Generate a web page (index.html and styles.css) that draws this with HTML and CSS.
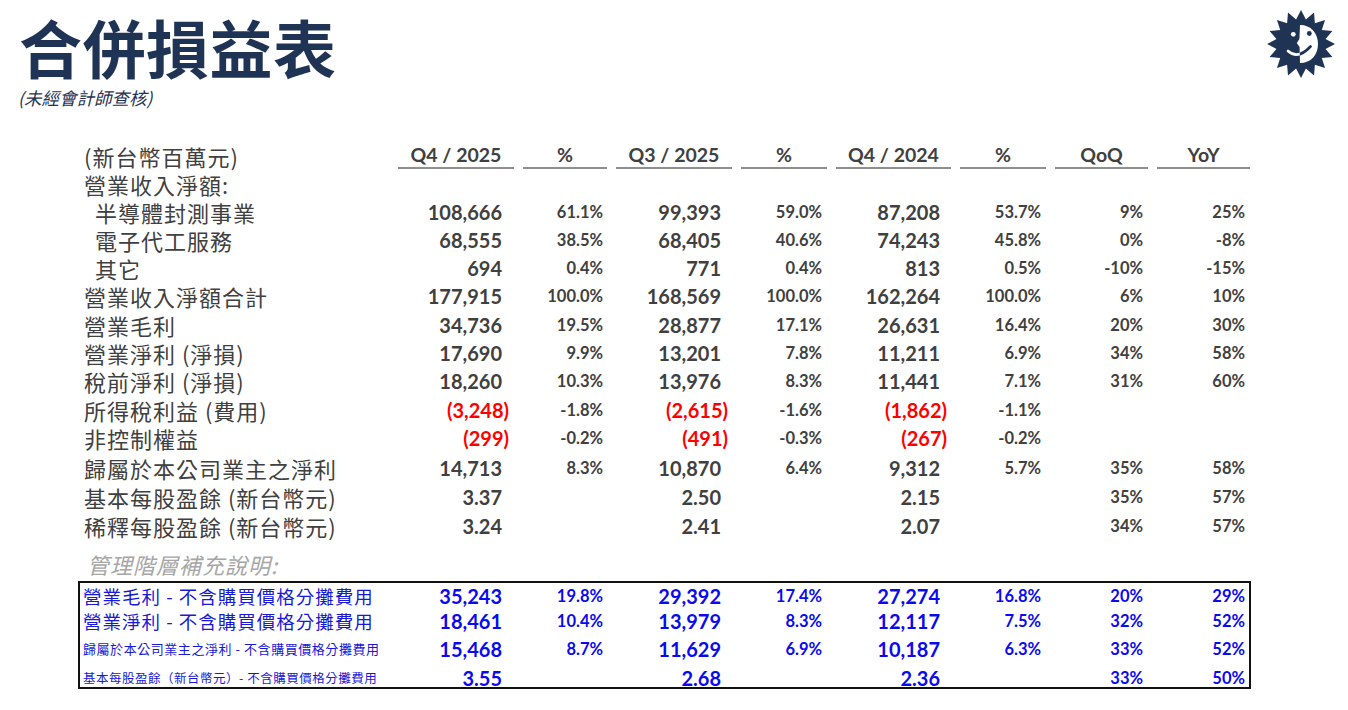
FILE: index.html
```html
<!DOCTYPE html>
<html lang="zh-Hant">
<head>
<meta charset="utf-8">
<title>合併損益表</title>
<link rel="stylesheet" href="styles.css">
</head>
<body>
<header class="top">
  <div class="titles">
    <h1 class="title">合併損益表</h1>
    <p class="subtitle">(未經會計師查核)</p>
  </div>
  <svg class="logo" viewBox="0 0 70 70" width="70" height="70" aria-hidden="true">
    <defs>
      <clipPath id="faceclip">
        <path d="M34,16 C45,16 52,24 52,35 C52,46 45,54 34,54 L33.6,38 L30.8,34 L33.4,30 Z"/>
      </clipPath>
    </defs>
    <polygon fill="#1f3354" points="35,1 39.88,10.48 48.01,3.59 48.89,14.21 59.04,10.96 55.79,21.11 66.41,21.99 59.52,30.12 69,35 59.52,39.88 66.41,48.01 55.79,48.89 59.04,59.04 48.89,55.79 48.01,66.41 39.88,59.52 35,69 30.12,59.52 21.99,66.41 21.11,55.79 10.96,59.04 14.21,48.89 3.59,48.01 10.48,39.88 1,35 10.48,30.12 3.59,21.99 14.21,21.11 10.96,10.96 21.11,14.21 21.99,3.59 30.12,10.48"/>
    <path fill="#ffffff" d="M34,16 C45,16 52,24 52,35 C52,46 45,54 34,54 L33.6,38 L30.8,34 L33.4,30 Z"/>
    <circle cx="27.3" cy="25.3" r="2.4" fill="#ffffff"/>
    <circle cx="43.3" cy="24.5" r="2.4" fill="#1f3354"/>
    <path d="M22,42 Q32,51 44.5,37.5" fill="none" stroke="#ffffff" stroke-width="2.6" stroke-linecap="round"/>
    <path d="M22,42 Q32,51 44.5,37.5" fill="none" stroke="#1f3354" stroke-width="2.6" stroke-linecap="round" clip-path="url(#faceclip)"/>
  </svg>
</header>

<section class="stmt">
  <div class="row head">
    <div class="lbl">(新台幣百萬元)</div>
    <div class="h">Q4 / 2025</div>
    <div class="h">%</div>
    <div class="h">Q3 / 2025</div>
    <div class="h">%</div>
    <div class="h">Q4 / 2024</div>
    <div class="h">%</div>
    <div class="h">QoQ</div>
    <div class="h">YoY</div>
  </div>

  <div class="row mt1">
    <div class="lbl">營業收入淨額:</div>
    <div></div><div></div><div></div><div></div><div></div><div></div><div></div><div></div>
  </div>

  <div class="row">
    <div class="lbl ind">半導體封測事業</div>
    <div class="n">108,666</div><div class="p">61.1%</div>
    <div class="n">99,393</div><div class="p">59.0%</div>
    <div class="n">87,208</div><div class="p">53.7%</div>
    <div class="p">9%</div><div class="p">25%</div>
  </div>

  <div class="row">
    <div class="lbl ind">電子代工服務</div>
    <div class="n">68,555</div><div class="p">38.5%</div>
    <div class="n">68,405</div><div class="p">40.6%</div>
    <div class="n">74,243</div><div class="p">45.8%</div>
    <div class="p">0%</div><div class="p">-8%</div>
  </div>

  <div class="row">
    <div class="lbl ind">其它</div>
    <div class="n">694</div><div class="p">0.4%</div>
    <div class="n">771</div><div class="p">0.4%</div>
    <div class="n">813</div><div class="p">0.5%</div>
    <div class="p">-10%</div><div class="p">-15%</div>
  </div>

  <div class="row">
    <div class="lbl">營業收入淨額合計</div>
    <div class="n">177,915</div><div class="p">100.0%</div>
    <div class="n">168,569</div><div class="p">100.0%</div>
    <div class="n">162,264</div><div class="p">100.0%</div>
    <div class="p">6%</div><div class="p">10%</div>
  </div>

  <div class="row mt1">
    <div class="lbl">營業毛利</div>
    <div class="n">34,736</div><div class="p">19.5%</div>
    <div class="n">28,877</div><div class="p">17.1%</div>
    <div class="n">26,631</div><div class="p">16.4%</div>
    <div class="p">20%</div><div class="p">30%</div>
  </div>

  <div class="row">
    <div class="lbl">營業淨利 (淨損)</div>
    <div class="n">17,690</div><div class="p">9.9%</div>
    <div class="n">13,201</div><div class="p">7.8%</div>
    <div class="n">11,211</div><div class="p">6.9%</div>
    <div class="p">34%</div><div class="p">58%</div>
  </div>

  <div class="row">
    <div class="lbl">稅前淨利 (淨損)</div>
    <div class="n">18,260</div><div class="p">10.3%</div>
    <div class="n">13,976</div><div class="p">8.3%</div>
    <div class="n">11,441</div><div class="p">7.1%</div>
    <div class="p">31%</div><div class="p">60%</div>
  </div>

  <div class="row h29">
    <div class="lbl">所得稅利益 (費用)</div>
    <div class="n"><span class="neg">(3,248)</span></div><div class="p">-1.8%</div>
    <div class="n"><span class="neg">(2,615)</span></div><div class="p">-1.6%</div>
    <div class="n"><span class="neg">(1,862)</span></div><div class="p">-1.1%</div>
    <div class="p"></div><div class="p"></div>
  </div>

  <div class="row">
    <div class="lbl">非控制權益</div>
    <div class="n"><span class="neg">(299)</span></div><div class="p">-0.2%</div>
    <div class="n"><span class="neg">(491)</span></div><div class="p">-0.3%</div>
    <div class="n"><span class="neg">(267)</span></div><div class="p">-0.2%</div>
    <div class="p"></div><div class="p"></div>
  </div>

  <div class="row mt2">
    <div class="lbl">歸屬於本公司業主之淨利</div>
    <div class="n">14,713</div><div class="p">8.3%</div>
    <div class="n">10,870</div><div class="p">6.4%</div>
    <div class="n">9,312</div><div class="p">5.7%</div>
    <div class="p">35%</div><div class="p">58%</div>
  </div>

  <div class="row mt1">
    <div class="lbl">基本每股盈餘 (新台幣元)</div>
    <div class="n">3.37</div><div class="p"></div>
    <div class="n">2.50</div><div class="p"></div>
    <div class="n">2.15</div><div class="p"></div>
    <div class="p">35%</div><div class="p">57%</div>
  </div>

  <div class="row mt1">
    <div class="lbl">稀釋每股盈餘 (新台幣元)</div>
    <div class="n">3.24</div><div class="p"></div>
    <div class="n">2.41</div><div class="p"></div>
    <div class="n">2.07</div><div class="p"></div>
    <div class="p">34%</div><div class="p">57%</div>
  </div>

  <div class="note">管理階層補充說明:</div>

  <div class="box">
    <div class="row b1">
      <div class="bl bl-lg">營業毛利 - 不含購買價格分攤費用</div>
      <div class="n">35,243</div><div class="p">19.8%</div>
      <div class="n">29,392</div><div class="p">17.4%</div>
      <div class="n">27,274</div><div class="p">16.8%</div>
      <div class="p">20%</div><div class="p">29%</div>
    </div>
    <div class="row b2">
      <div class="bl bl-lg">營業淨利 - 不含購買價格分攤費用</div>
      <div class="n">18,461</div><div class="p">10.4%</div>
      <div class="n">13,979</div><div class="p">8.3%</div>
      <div class="n">12,117</div><div class="p">7.5%</div>
      <div class="p">32%</div><div class="p">52%</div>
    </div>
    <div class="row b3">
      <div class="bl bl-sm">歸屬於本公司業主之淨利 - 不含購買價格分攤費用</div>
      <div class="n">15,468</div><div class="p">8.7%</div>
      <div class="n">11,629</div><div class="p">6.9%</div>
      <div class="n">10,187</div><div class="p">6.3%</div>
      <div class="p">33%</div><div class="p">52%</div>
    </div>
    <div class="row b4">
      <div class="bl bl-xs">基本每股盈餘（新台幣元）- 不含購買價格分攤費用</div>
      <div class="n">3.55</div><div class="p"></div>
      <div class="n">2.68</div><div class="p"></div>
      <div class="n">2.36</div><div class="p"></div>
      <div class="p">33%</div><div class="p">50%</div>
    </div>
  </div>
</section>
</body>
</html>
```

FILE: styles.css
```css
* { box-sizing: border-box; }

body {
  margin: 0;
  width: 1348px;
  height: 710px;
  overflow: hidden;
  background: #ffffff;
  color: #404040;
  font-family: "Noto Sans CJK TC", "Noto Sans", sans-serif;
}

/* ---------- header ---------- */
.top {
  display: flex;
  justify-content: space-between;
  align-items: flex-start;
  padding: 10px 12px 0 19px;
}

.title {
  margin: 0;
  font-size: 63px;
  line-height: 72px;
  letter-spacing: 0.5px;
  font-weight: 700;
  color: #1f3354;
}

.subtitle {
  margin: 7px 0 0 -1px;
  font-size: 17.5px;
  line-height: 17px;
  font-style: italic;
  color: #1f3354;
}

.logo {
  display: block;
  margin-top: -1px;
}

/* ---------- statement table ---------- */
.stmt {
  margin: 36px 0 0 78px;
  width: 1173px;
}

.row {
  display: grid;
  grid-template-columns: 311px 116px 84px 116px 86px 115px 86px 93px 93px;
  column-gap: 9px;
  height: 28px;
  align-items: center;
}

.mt1 { margin-top: 1px; }
.mt2 { margin-top: 2px; }
.h29 { height: 29px; }

.lbl {
  padding-left: 6px;
  font-size: 22px;
  line-height: 26px;
  letter-spacing: 1px;
  white-space: nowrap;
  color: #404040;
}

.lbl.ind { padding-left: 17px; }

.n, .p {
  text-align: right;
  font-family: "Lato", "Open Sans", sans-serif;
  font-weight: 700;
  white-space: nowrap;
  line-height: 24px;
}

.n { font-size: 20px; }
.p { font-size: 16.5px; }

.row > :nth-child(2) { padding-right: 12px; }
.row > :nth-child(3) { padding-right: 4px; }
.row > :nth-child(4) { padding-right: 11px; }
.row > :nth-child(5) { padding-right: 5px; }
.row > :nth-child(6) { padding-right: 11px; }
.row > :nth-child(7) { padding-right: 5px; }
.row > :nth-child(8) { padding-right: 5px; }
.row > :nth-child(9) { padding-right: 5px; }

.neg {
  color: #ff0000;
  margin-right: -7px;
}

/* header row */
.row.head {
  height: 27px;
  align-items: stretch;
}

.row.head .lbl {
  display: flex;
  align-items: center;
}

.h {
  display: flex;
  align-items: center;
  justify-content: center;
  border-bottom: 2px solid #8f8f8f;
  font-family: "Lato", "Open Sans", sans-serif;
  font-weight: 700;
  font-size: 19.5px;
  color: #404040;
  padding: 0 !important;
}

.note {
  margin-top: 10px;
  height: 28px;
  display: flex;
  align-items: center;
  padding-left: 9px;
  font-size: 22px;
  letter-spacing: 1px;
  font-style: italic;
  color: #a6a6a6;
}

/* ---------- boxed non-GAAP rows ---------- */
.box {
  margin-top: 3px;
  width: 1173px;
  border: 2px solid #111111;
  color: #0a0af0;
}

.box .row {
  grid-template-columns: 309px 116px 84px 116px 86px 115px 86px 93px 91px;
}

.box .row > :nth-child(9) { padding-right: 3px; }

.box .n, .box .p { color: #0a0af0; }

.b1 { height: 26px; }
.b2 { height: 23px; }
.b3 { height: 34px; }
.b4 { height: 21px; }

.bl {
  padding-left: 3px;
  white-space: nowrap;
  color: #1818d8;
  line-height: 20px;
}

.bl-lg { font-size: 18.5px; letter-spacing: 1px; }
.bl-sm { font-size: 13px; letter-spacing: 0.55px; line-height: 16px; }
.bl-xs { font-size: 12.5px; letter-spacing: 0.5px; line-height: 16px; }
```
